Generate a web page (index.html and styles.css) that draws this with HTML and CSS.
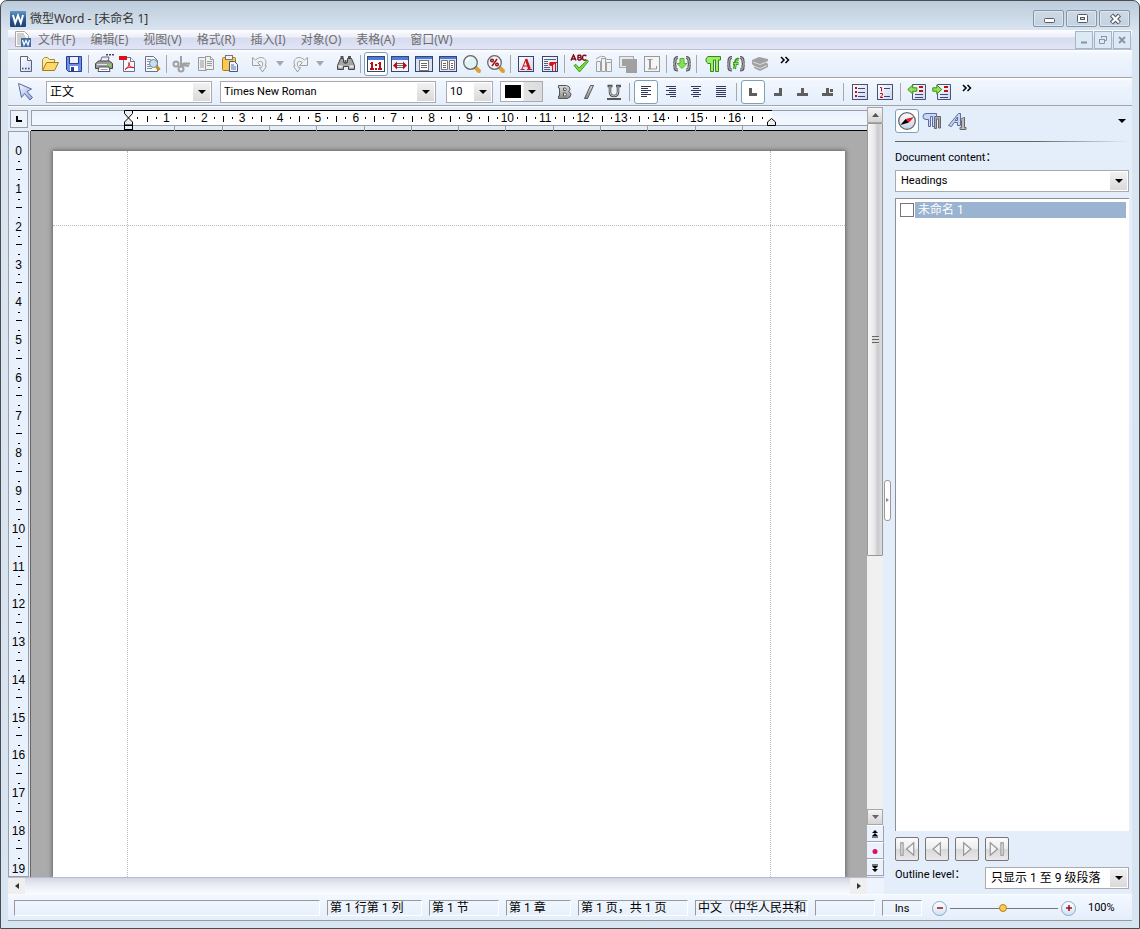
FILE: index.html
```html
<!DOCTYPE html>
<html lang="zh-CN">
<head>
<meta charset="utf-8">
<title>微型Word - [未命名 1]</title>
<link rel="stylesheet" href="styles.css">
</head>
<body>
<svg class="defs" aria-hidden="true">
  <defs>
    <linearGradient id="gPage" x1="0" y1="0" x2="1" y2="1"><stop offset="0" stop-color="#fff"/><stop offset="1" stop-color="#ccd6ee"/></linearGradient>
    <linearGradient id="gWord" x1="0" y1="0" x2="0" y2="1"><stop offset="0" stop-color="#5f97c6"/><stop offset=".5" stop-color="#2a5790"/><stop offset="1" stop-color="#1d4075"/></linearGradient>
    <linearGradient id="gBlue" x1="0" y1="0" x2="1" y2="1"><stop offset="0" stop-color="#fff"/><stop offset="1" stop-color="#8fa4e0"/></linearGradient>
    <linearGradient id="gGray" x1="0" y1="0" x2="0" y2="1"><stop offset="0" stop-color="#ddd"/><stop offset="1" stop-color="#8a8a8a"/></linearGradient>
    <linearGradient id="gBall" x1="0" y1="0" x2="0" y2="1"><stop offset="0" stop-color="#fff"/><stop offset="1" stop-color="#c4d4e8"/></linearGradient>
  </defs>
</svg>
<div class="window">
  <header class="titlebar">
    <svg class="app-icon" viewBox="0 0 16 16"><rect width="16" height="16" rx="1" fill="url(#gWord)"/><path d="M3 4l2.200 8L8 4.500l2.800 7.500L13 4" fill="none" stroke="#fff" stroke-width="2"/></svg>
    <h1 class="title">微型Word - [未命名 1]</h1>
    <div class="window-buttons">
      <button aria-label="最小化"><svg viewBox="0 0 18 12"><rect x="4.500" y="5.500" width="10" height="4" rx="1" fill="#fff" stroke="#555a66"/></svg></button>
      <button aria-label="最大化"><svg viewBox="0 0 18 12"><rect x="4.500" y="1.500" width="10" height="8" rx="1" fill="#fff" stroke="#555a66"/><rect x="7.500" y="4.500" width="4" height="2" fill="#cdd8e4" stroke="#555a66"/></svg></button>
      <button aria-label="关闭"><svg viewBox="0 0 18 12"><path d="M5.500 2l8 8m0-8l-8 8" stroke="#555a66" stroke-width="4.500"/><path d="M6 2.500l7 7m0-7l-7 7" stroke="#fff" stroke-width="2.200"/></svg></button>
    </div>
  </header>

  <div class="client">
    <nav class="menubar">
      <svg class="doc-icon" viewBox="0 0 18 18"><path d="M1.500 .5h9l4 4v11h-13z" fill="#fdfdfd" stroke="#a8a8a8"/><path d="M3 3h7M3 5h8M3 7h9M3 9h4M3 11h4M3 13h4" stroke="#a0a0a0"/><rect x="7" y="7" width="10" height="9" fill="#3f6da6"/><path d="M8.500 9l1.500 5 2-4.500 2 4.500 1.500-5" fill="none" stroke="#fff" stroke-width="1.300"/></svg>
      <div class="menus">
        <button>文件(F)</button><button>编辑(E)</button><button>视图(V)</button><button>格式(R)</button><button>插入(I)</button><button>对象(O)</button><button>表格(A)</button><button>窗口(W)</button>
      </div>
      <div class="mdi-buttons">
        <button aria-label="最小化文档"><svg viewBox="0 0 12 12"><path d="M3 8.500h6" stroke="#8496a8" stroke-width="2"/></svg></button>
        <button aria-label="还原文档"><svg viewBox="0 0 12 12" fill="none" stroke="#8496a8"><path d="M4.500 4V2.500h5v4H8"/><path d="M4 2.500h6M2 5.500h6"/><path d="M2.500 5.500h5v4h-5z"/></svg></button>
        <button aria-label="关闭文档"><svg viewBox="0 0 12 12"><path d="M3 3l6 6m0-6l-6 6" stroke="#8496a8" stroke-width="2"/></svg></button>
      </div>
    </nav>

    <div class="toolbar standard" role="toolbar">
      <button aria-label="新建"><svg viewBox="0 0 20 20"><path d="M4.500 2.500h7l4 4v11h-11z" fill="url(#gPage)" stroke="#5a6480"/><path d="M11.500 2.500v4h4" fill="#fff" stroke="#5a6480"/><path d="M6 14.500h8" stroke="#445" stroke-width="1.500" stroke-dasharray="1.500 1.500"/></svg></button>
      <button aria-label="打开"><svg viewBox="0 0 20 20"><path d="M2.500 16V5.500l2-2h3l2 2h5v3" fill="#ffe9a0" stroke="#b18a2c"/><path d="M2.500 16.500l4-8h12l-4 8z" fill="#ffd869" stroke="#a57c20"/></svg></button>
      <button aria-label="保存"><svg viewBox="0 0 20 20"><path d="M2.500 2.500h15v15h-13l-2-2z" fill="#6d8de8" stroke="#27418f"/><rect x="5.500" y="2.500" width="9" height="7" fill="#eef3ff" stroke="#27418f"/><rect x="6" y="12" width="8" height="5" fill="#fff"/><rect x="7" y="13" width="3" height="4" fill="#27418f"/></svg></button>
      <i class="sep"></i>
      <button aria-label="打印"><svg viewBox="0 0 20 20"><path d="M12 .8h8" stroke="#446" stroke-width="1.500" stroke-dasharray="2 1"/><path d="M6 8l2-5h7l-1 5z" fill="#e7eefb" stroke="#667"/><path d="M1.500 9.500l3-2.500h11l3 2.500v5h-17z" fill="#9a9a9a" stroke="#444"/><path d="M3 10.500h10" stroke="#e6e6e6"/><rect x="14" y="10" width="3" height="2" fill="#74e046"/><path d="M5 13h10l1 4.500H4z" fill="#fff" stroke="#555"/><path d="M6.500 15.500h7" stroke="#8aa0d0"/></svg></button>
      <button aria-label="导出 PDF"><svg viewBox="0 0 20 20"><path d="M5.500 3.500h7l4 4v10h-11z" fill="#f7f9fd" stroke="#68708a"/><path d="M12.500 3.500v4h4" fill="#fff" stroke="#68708a"/><rect x="1" y="2" width="8" height="4" fill="#d8101c"/><path d="M7 15.500c3-2 5-5 4-7-1 3 2 6 5 5-4-1-7 0-9 2z" fill="none" stroke="#d8101c"/></svg></button>
      <button aria-label="打印预览"><svg viewBox="0 0 20 20"><path d="M3.500 2.500h8l4 4v11h-12z" fill="#f7f9fd" stroke="#68708a"/><path d="M5 5.500h4M5 7.500h3M5 10.500h3M5 12.500h3M5 14.500h5" stroke="#8790a8"/><circle cx="11.500" cy="9.500" r="4" fill="#c4e2ee" stroke="#7a8190"/><path d="M14.500 12.500l3 3.500" stroke="#c38d1d" stroke-width="3"/></svg></button>
      <i class="sep"></i>
      <button aria-label="剪切"><svg viewBox="0 0 20 20" fill="none" stroke="#a0a0a0" stroke-width="2"><path d="M9 2v9l3-1.500h6M9 11l8 1"/><circle cx="4" cy="10" r="2.500"/><circle cx="9" cy="15" r="2.500"/></svg></button>
      <button aria-label="复制"><svg viewBox="0 0 20 20" fill="#eef0f4" stroke="#999"><path d="M2.500 3.500h6l2 2v11h-8z"/><path d="M4 7h4M4 9h4M4 11h4M4 13h4"/><path d="M9.500 2.500h5l3 3v10h-8z"/><path d="M11 7.500h5M11 9.500h5M11 11.500h5M14.500 2.500v3h3"/></svg></button>
      <button aria-label="粘贴"><svg viewBox="0 0 20 20"><rect x="2.500" y="3.500" width="13" height="13" rx="1" fill="#fbc94e" stroke="#a8771c"/><rect x="5.500" y="1.500" width="7" height="4" fill="#f2f2f2" stroke="#777"/><path d="M9.500 7.500h5l3 3v7h-8z" fill="#edf3ff" stroke="#415584"/><path d="M11 11h3M11 13h5M11 15h5" stroke="#5b70a8"/></svg></button>
      <button class="undo" aria-label="撤消"><svg viewBox="0 0 20 20"><path d="M2.500 3.500v8h8l-3-3c4-3 7 0 4 5l-2 .2 3 4.300 4-6-1.500-.5C18.500 6 12 0 5.500 6z" fill="#f0f2f6" stroke="#a0a0a0"/></svg></button>
      <button class="drop" aria-label="撤消列表"><svg viewBox="0 0 8 5"><path d="M0 0h8L4 5z" fill="#a4a7ac"/></svg></button>
      <button aria-label="重做"><svg viewBox="0 0 20 20"><path d="M17.500 3.500v8h-8l3-3c-4-3-7 0-4 5l2 .2-3 4.300-4-6 1.500-.5C1.500 6 8 0 14.500 6z" fill="#f0f2f6" stroke="#a0a0a0"/></svg></button>
      <button class="drop" aria-label="重做列表"><svg viewBox="0 0 8 5"><path d="M0 0h8L4 5z" fill="#a4a7ac"/></svg></button>
      <button class="find" aria-label="查找"><svg viewBox="0 0 20 20"><path d="M4.500 4.500h3v4h4v-4h4l3 7v4h-6v-3h-5v3h-6v-4z" fill="#a5a5a5" stroke="#444"/><path d="M4.500 3h3M12 3h3M9.500 6v4" stroke="#555" stroke-width="2"/><path d="M2.500 12.500h4M13.500 12.500h4" stroke="#eee" stroke-width="2"/></svg></button>
      <i class="sep"></i>
      <button class="on" aria-label="实际大小"><svg viewBox="0 0 20 20"><rect x="1.500" y="2.500" width="17" height="15" fill="#fff" stroke="#34466f"/><rect x="2" y="3" width="16" height="3" fill="#4d7ae0"/><path d="M4 9h1V8h2v6h1v2H4v-2h1v-4H4zM12 9h1V8h2v6h1v2h-4v-2h1v-4h-1zM9 10h2v2H9zM9 14h2v2H9z" fill="#bb0e14"/></svg></button>
      <button aria-label="适合页宽"><svg viewBox="0 0 20 20"><rect x="1.500" y="2.500" width="17" height="15" fill="#f4f6fc" stroke="#34466f"/><rect x="2" y="3" width="16" height="3" fill="#4d7ae0"/><path d="M3 11.500l4-4v8zM17 11.500l-4-4v8z" fill="#bb0e14"/><path d="M7 9.500h6M7 11.500h6M7 13.500h6" stroke="#666"/></svg></button>
      <button aria-label="整页"><svg viewBox="0 0 20 20"><rect x="1.500" y="2.500" width="17" height="15" fill="#dce2f3" stroke="#34466f"/><rect x="2" y="3" width="16" height="2" fill="#4d7ae0"/><rect x="5.500" y="6.500" width="9" height="10" fill="#fff" stroke="#777"/><path d="M7 9.500h6M7 11.500h6M7 13.500h6" stroke="#666"/></svg></button>
      <button aria-label="双页"><svg viewBox="0 0 20 20"><rect x="1.500" y="2.500" width="17" height="15" fill="#dce2f3" stroke="#34466f"/><rect x="2" y="3" width="16" height="2" fill="#4d7ae0"/><path d="M3.500 6.500h6v9h-6zM11.500 6.500h5v9h-5z" fill="#fff" stroke="#777"/><path d="M5 9.500h3M5 11.500h3M5 13.500h3M13 9.500h2M13 11.500h2M13 13.500h2" stroke="#666"/></svg></button>
      <button aria-label="缩放"><svg viewBox="0 0 20 20"><path d="M13 13l4 4" stroke="#d9a233" stroke-width="4" stroke-linecap="round"/><circle cx="8.500" cy="8.500" r="6.800" fill="#dff2f4" stroke="#666" stroke-width="1.300"/><path d="M4.500 8c0-3 2-4 4-4" fill="none" stroke="#fff" stroke-width="2"/></svg></button>
      <button aria-label="缩放比例"><svg viewBox="0 0 20 20"><path d="M13 13l4 4" stroke="#d9a233" stroke-width="4" stroke-linecap="round"/><circle cx="8.500" cy="8.500" r="6.800" fill="#eef6fa" stroke="#666" stroke-width="1.300"/><path d="M11 5l-5 7" stroke="#a01018" stroke-width="1.500"/><circle cx="6" cy="6.500" r="1.300" fill="none" stroke="#a01018" stroke-width="1.500"/><circle cx="11" cy="10.500" r="1.300" fill="none" stroke="#a01018" stroke-width="1.500"/></svg></button>
      <i class="sep"></i>
      <button aria-label="字符格式"><svg viewBox="0 0 20 20"><rect x="2.500" y="2.500" width="15" height="15" fill="url(#gPage)" stroke="#34466f"/><path d="M6 15L9.800 5.500M7 12h5M4.500 15.500h4M11 15.500h5" fill="none" stroke="#cb1118"/><path d="M10 5l3.500 10" stroke="#cb1118" stroke-width="2.500"/></svg></button>
      <button aria-label="段落格式"><svg viewBox="0 0 20 20"><rect x="2.500" y="2.500" width="15" height="15" fill="url(#gPage)" stroke="#34466f"/><path d="M4 5.500h12M4 7.500h4M4 9.500h4M4 11.500h4M4 13.500h6M4 15.500h6" stroke="#555f7c"/><path d="M17 8h-6a2 2 0 000 4h1" fill="#d11"/><path d="M12.500 8v9M15.500 8v9M10.500 8.500H17" stroke="#d11"/></svg></button>
      <i class="sep"></i>
      <button class="abc" aria-label="拼写检查"><svg viewBox="0 0 20 20"><path d="M4 11.500l2-1 3 3.500 8.500-8 .8 1.500L9.500 18z" fill="#79e23e" stroke="#369b13"/><g fill="none" stroke="#7d1116" stroke-width="1.500"><path d="M1 6.500L3.500 1 6 6.500M2 5h3M8 1v5M8 1.200h2q2 1.200 0 2.300 3 1.200 0 2.500H8M16.500 1.700q-4-1.500-4 2t4 2"/></g></svg></button>
      <button aria-label="插入图表"><svg viewBox="0 0 20 20" fill="#f0f2f6" stroke="#a0a0a0"><path d="M2.500 7.500h4v10h-4zM7.500 4.500h4v13h-4zM12.500 8.500h5v9h-5z"/><path d="M2 5l5-3M7.500 2.500h3l2 3h5v3" fill="none"/></svg></button>
      <button aria-label="插入框架"><svg viewBox="0 0 20 20"><rect x="1.500" y="2.500" width="14" height="11" fill="#e7e9ec" stroke="#aaa"/><path d="M4 5h4v7H4z" fill="#a0a0a0"/><path d="M8 5h11v14H8z" fill="#a0a0a0"/></svg></button>
      <button aria-label="文本框"><svg viewBox="0 0 20 20"><rect x="2.500" y="2.500" width="15" height="15" fill="#f4f5f7" stroke="#999"/><path d="M5.500 5.500h5M6 15h8.500v-3" fill="none" stroke="#999"/><path d="M8 5v10" stroke="#999" stroke-width="2"/></svg></button>
      <i class="sep"></i>
      <button aria-label="插入域"><svg viewBox="0 0 20 20"><path d="M6 3.500q-3 0-3 3V8q0 2-2 2 2 0 2 2v2q0 2 3 2M14 3.500q3 0 3 3V8q0 2 2 2-2 0-2 2v2q0 2-3 2" fill="none" stroke="#555" stroke-width="3"/><path d="M6 3.500q-3 0-3 3V8q0 2-2 2 2 0 2 2v2q0 2 3 2M14 3.500q3 0 3 3V8q0 2 2 2-2 0-2 2v2q0 2-3 2" fill="none" stroke="#bbb"/><path d="M8 4.500h4v5h3l-5 5-5-5h3z" fill="#87e34b" stroke="#5cae36"/></svg></button>
      <i class="sep"></i>
      <button aria-label="显示段落标记"><svg viewBox="0 0 20 20"><path d="M18.500 2.500H6a4 4 0 000 7h2.500v8h3V6h2v11.500h3V6h2z" fill="#9ced6a" stroke="#38861c"/></svg></button>
      <button aria-label="显示域代码"><svg viewBox="0 0 20 20"><path d="M6 3.500q-3 0-3 3V8q0 2-2 2 2 0 2 2v2q0 2 3 2M14 3.500q3 0 3 3V8q0 2 2 2-2 0-2 2v2q0 2-3 2" fill="none" stroke="#555" stroke-width="3"/><path d="M6 3.500q-3 0-3 3V8q0 2-2 2 2 0 2 2v2q0 2 3 2M14 3.500q3 0 3 3V8q0 2 2 2-2 0-2 2v2q0 2-3 2" fill="none" stroke="#bbb"/><path d="M13 5.500q-3-1-3.500 3L8.500 15M7 9.500h5.500" fill="none" stroke="#369320" stroke-width="3"/><path d="M13 5.500q-2.500-.5-3 3L8.500 15M7.500 9.500H12" fill="none" stroke="#8be551"/></svg></button>
      <button aria-label="数据库"><svg viewBox="0 0 20 20"><path d="M2 6l7-3 9 2v2l-2 1 2 2v3l-8 4-6-3v-2l-2-2V8z" fill="#a0a0a0"/><path d="M3 8l7 2.500L17 8M4 12l6 2.500 7-3" fill="none" stroke="#ddd"/></svg></button>
      <button class="more" aria-label="更多按钮"><svg viewBox="0 0 10 8"><path d="M1 1l3 3-3 3M5.500 1l3 3-3 3" fill="none" stroke="#000" stroke-width="1.500"/></svg></button>
    </div>

    <div class="toolbar format" role="toolbar">
      <button class="picker" aria-label="选择对象"><svg viewBox="0 0 20 20"><path d="M3.500 1.500l13 5.500-4.500 2.500 5.500 6-2.500 2.500-5.500-6.500-3 4z" fill="url(#gBlue)" stroke="#5a67a0"/></svg></button>
      <div class="combo style"><select aria-label="样式"><option>正文</option></select></div>
      <div class="combo font"><select aria-label="字体"><option>Times New Roman</option></select></div>
      <div class="combo size"><select aria-label="字号"><option>10</option></select></div>
      <button class="color" aria-label="字体颜色"><i></i></button>
      <div class="group">
        <button aria-label="粗体"><svg viewBox="0 0 20 20"><path fill-rule="evenodd" d="M4.500 3.500h8q3.500 1 3.500 3.500 0 2-1.500 2.500 2.500 1 2.500 3 0 3-4 4H4.500v-2.500h1v-8h-1zM9.500 6v2.500h2q1.500-1 0-2.500zM9.500 11v3h2q2-1.500 0-3z" fill="url(#gGray)" stroke="#555"/></svg></button>
        <button aria-label="斜体"><svg viewBox="0 0 20 20"><path d="M11.500 3.500h3l-6 13h-3z" fill="url(#gGray)" stroke="#555"/></svg></button>
        <button aria-label="下划线"><svg viewBox="0 0 20 20"><path d="M6 4v6q0 4 4 4t4-4V4M3.500 4h5M12 4h5" fill="none" stroke="#555" stroke-width="2.600"/><path d="M6 4v6q0 4 4 4t4-4V4" fill="none" stroke="#bbb"/><path d="M3 17h14" stroke="#555" stroke-width="2"/></svg></button>
      </div>
      <i class="sep"></i>
      <div class="group">
        <button class="on" aria-label="左对齐"><svg viewBox="0 0 20 20" stroke="#33395a"><path d="M5 4.500h10M5 6.500h7M5 8.500h10M5 10.500h7M5 12.500h10M5 14.500h6"/></svg></button>
        <button aria-label="右对齐"><svg viewBox="0 0 20 20" stroke="#33395a"><path d="M5 4.500h10M8 6.500h7M5 8.500h10M8 10.500h7M5 12.500h10M9 14.500h6"/></svg></button>
        <button aria-label="居中"><svg viewBox="0 0 20 20" stroke="#33395a"><path d="M5 4.500h10M7 6.500h6M5 8.500h10M7 10.500h6M5 12.500h10M7 14.500h6"/></svg></button>
        <button aria-label="两端对齐"><svg viewBox="0 0 20 20" stroke="#33395a"><path d="M5 4.500h10M5 6.500h10M5 8.500h10M5 10.500h10M5 12.500h10M5 14.500h10"/></svg></button>
      </div>
      <i class="sep"></i>
      <div class="group">
        <button class="on" aria-label="左制表符"><svg viewBox="0 0 20 20"><path d="M6 6h3v5h5v3H6z" fill="#5e5e5e"/></svg></button>
        <button aria-label="右制表符"><svg viewBox="0 0 20 20"><path d="M14 6h-3v5H6v3h8z" fill="#5e5e5e"/></svg></button>
        <button aria-label="居中制表符"><svg viewBox="0 0 20 20"><path d="M8 6h3v5h4v3H4v-3h4z" fill="#5e5e5e"/></svg></button>
        <button aria-label="小数点制表符"><svg viewBox="0 0 20 20"><path d="M8 6h3v5h4v3H4v-3h4zM12 7h3v3h-3z" fill="#5e5e5e"/></svg></button>
      </div>
      <i class="sep"></i>
      <div class="group">
        <button aria-label="项目符号"><svg viewBox="0 0 20 20"><rect x="2.500" y="2.500" width="15" height="15" fill="url(#gPage)" stroke="#4a5274"/><path d="M5 5h2v2H5zM5 9h2v2H5zM5 13h2v2H5z" fill="#bc1018"/><path d="M8 6.500h7M8 10.500h7M8 14.500h7" stroke="#3c4878"/></svg></button>
        <button aria-label="编号"><svg viewBox="0 0 20 20"><rect x="2.500" y="2.500" width="15" height="15" fill="url(#gPage)" stroke="#4a5274"/><path d="M5 5.500h1.500v4M5 11.500h2.500v1.700L5 15.500h3" fill="none" stroke="#bc1018"/><path d="M9 6.500h6M9 14.500h6" stroke="#3c4878"/></svg></button>
      </div>
      <i class="sep"></i>
      <div class="group">
        <button aria-label="减少缩进"><svg viewBox="0 0 20 20"><path d="M5.500 2.500h13v15h-13z" fill="url(#gPage)" stroke="#4a5274"/><path d="M12 5h4M12 9h4" stroke="#bc1018" stroke-width="2"/><path d="M8 12.500h8M8 15.500h8" stroke="#3c4878"/><path d="M.8 7.500l5-4.500v2.800h4v3.400h-4V12z" fill="#91e553" stroke="#388d18"/></svg></button>
        <button aria-label="增加缩进"><svg viewBox="0 0 20 20"><path d="M5.500 2.500h13v15h-13z" fill="url(#gPage)" stroke="#4a5274"/><path d="M12 5h4M12 9h4" stroke="#bc1018" stroke-width="2"/><path d="M8 12.500h8M8 15.500h8" stroke="#3c4878"/><path d="M9.800 7.500l-5-4.500v2.800h-4v3.400h4V12z" fill="#91e553" stroke="#388d18"/></svg></button>
      </div>
      <button class="more" aria-label="更多按钮"><svg viewBox="0 0 10 8"><path d="M1 1l3 3-3 3M5.500 1l3 3-3 3" fill="none" stroke="#000" stroke-width="1.500"/></svg></button>
    </div>

    <div class="body">
      <div class="editor">
        <div class="view">
          <div class="view-main">
            <div class="ruler-row">
              <button class="tab-kind" aria-label="制表符类型"><svg viewBox="0 0 8 8"><path d="M1 1h2v4h4v2H1z"/></svg></button>
              <div class="ruler">
                <div class="ruler-scale">
                  <div class="numbers">
                    <span>1</span><span>2</span><span>3</span><span>4</span><span>5</span><span>6</span><span>7</span><span>8</span><span>9</span><span>10</span><span>11</span><span>12</span><span>13</span><span>14</span><span>15</span><span class="last">16</span>
                  </div>
                </div>
                <div class="tabstops"><i></i><i></i><i></i><i></i><i></i><i></i><i></i><i></i><i></i><i></i><i></i><i></i><i></i></div>
                <svg class="indent-left" viewBox="0 0 9 20"><path d="M.5 .5h8v3L4.500 8l4 4v3h-8v-3l4-4-4-4.500z" fill="#eee" stroke="#000"/><rect x=".5" y="15.500" width="8" height="4" fill="#e8edf5" stroke="#000"/></svg>
                <svg class="indent-right" viewBox="0 0 9 8"><path d="M.5 7.500V4l4-3.500 4 3.500v3.500z" fill="#eee" stroke="#000"/></svg>
              </div>
            </div>
            <div class="canvas-row">
              <div class="vruler"><div class="vnumbers">
                <span>0</span><span>1</span><span>2</span><span>3</span><span>4</span><span>5</span><span>6</span><span>7</span><span>8</span><span>9</span><span>10</span><span>11</span><span>12</span><span>13</span><span>14</span><span>15</span><span>16</span><span>17</span><span>18</span><span>19</span>
              </div></div>
              <main class="canvas"><div class="page"><div class="page-head"></div><div class="page-text"></div></div></main>
            </div>
          </div>
          <div class="vscroll">
            <button class="arrow" aria-label="向上滚动"><svg viewBox="0 0 7 4"><path d="M0 4L3.500 0 7 4z" fill="#555"/></svg></button>
            <div class="thumb"><i></i></div>
            <div class="track"></div>
            <button class="arrow" aria-label="向下滚动"><svg viewBox="0 0 7 4"><path d="M0 0h7L3.500 4z" fill="#666"/></svg></button>
            <button class="jump" aria-label="上一页"><svg viewBox="0 0 8 8"><path d="M4 0l3 3H1zM4 3l3 3H1zM1 6.500h6v1H1z"/></svg></button>
            <button class="jump" aria-label="选择浏览对象"><svg viewBox="0 0 8 8"><circle cx="4" cy="4.500" r="2.500" fill="#d6124c"/><circle cx="3.500" cy="4" r="1" fill="#f0a"/></svg></button>
            <button class="jump" aria-label="下一页"><svg viewBox="0 0 8 8"><path d="M4 8L1 5h6zM4 5L1 2h6zM1 .5h6v1H1z"/></svg></button>
          </div>
        </div>
        <div class="hscroll">
          <button aria-label="向左滚动"><svg viewBox="0 0 4 8"><path d="M4 1v6L0 4z" fill="#333"/></svg></button>
          <div class="htrack"></div>
          <button aria-label="向右滚动"><svg viewBox="0 0 4 8"><path d="M0 1v6l4-3z" fill="#333"/></svg></button>
        </div>
      </div>

      <aside class="sidebar">
        <button class="splitter" aria-label="折叠侧栏"><svg viewBox="0 0 4 6"><path d="M0 1l3 2-3 2z" fill="#888"/></svg></button>
        <div class="panel">
          <div class="panel-tabs">
            <button class="on" aria-label="导航"><svg viewBox="0 0 20 20"><circle cx="10" cy="10" r="8.300" fill="url(#gBall)" stroke="#666" stroke-width="1.300"/><path d="M3.500 14L8.500 8l3.500 3.500z" fill="#000"/><path d="M17 6L8.500 8l3.500 3.500z" fill="#f0141c"/></svg></button>
            <button aria-label="段落样式"><svg viewBox="0 0 20 20"><path d="M18.500 5.500h-8v4h2v8h2V8h2v9h2z" fill="#aaa" stroke="#666"/><path d="M14.500 2.500H4a3 3 0 000 6h2.500v7h2v-10h2v10h2v-10h2z" fill="#c9d7f5" stroke="#5a6d9c"/></svg></button>
            <button aria-label="字符样式"><svg viewBox="0 0 20 20"><path d="M13.500 8.500l3-2h1v10h1.500v2h-6v-2h1.500V10z" fill="#bbb" stroke="#666"/><path d="M1.500 14.500L11.500 2.500h2v12h-3v-3H7l-2.500 4zM8 9.500h2.500v-3.500z" fill="#c9d7f5" stroke="#5a6d9c"/></svg></button>
            <button class="panel-menu" aria-label="面板菜单"><svg viewBox="0 0 8 4"><path d="M0 0h8L4 4z"/></svg></button>
          </div>
          <label class="content-label" for="content">Document content：</label>
          <div class="combo content"><select id="content"><option>Headings</option></select></div>
          <div class="tree">
            <input type="checkbox" id="doc1"><label for="doc1">未命名 1</label>
          </div>
          <div class="nav-buttons">
            <button aria-label="第一个"><svg viewBox="0 0 16 16"><path d="M2.500 2.500h2v11h-2zM14 2.500v11L7.500 8z"/></svg></button>
            <button aria-label="上一个"><svg viewBox="0 0 16 16"><path d="M11 2.500v11L4.500 8z"/></svg></button>
            <button aria-label="下一个"><svg viewBox="0 0 16 16"><path d="M5 2.500v11L11.500 8z"/></svg></button>
            <button aria-label="最后一个"><svg viewBox="0 0 16 16"><path d="M11.500 2.500h2v11h-2zM2 2.500v11L8.500 8z"/></svg></button>
          </div>
          <div class="outline">
            <label for="level">Outline level：</label>
            <div class="combo level"><select id="level"><option>只显示 1 至 9 级段落</option></select></div>
          </div>
        </div>
      </aside>
    </div>

    <footer class="status">
      <span class="cell message"></span>
      <span class="cell position">第 1 行第 1 列</span>
      <span class="cell section">第 1 节</span>
      <span class="cell chapter">第 1 章</span>
      <span class="cell pages">第 1 页，共 1 页</span>
      <span class="cell language">中文（中华人民共和</span>
      <span class="cell blank"></span>
      <span class="cell insert">Ins</span>
      <div class="zoom">
        <button aria-label="缩小"><svg viewBox="0 0 8 8"><path d="M1 4h6" stroke="#a00d18" stroke-width="1.500"/></svg></button>
        <input type="range" aria-label="显示比例" min="0" max="100" value="49">
        <button aria-label="放大"><svg viewBox="0 0 8 8"><path d="M1 4h6M4 1v6" stroke="#a00d18" stroke-width="1.500"/></svg></button>
      </div>
      <span class="percent">100%</span>
    </footer>
  </div>
</div>
</body>
</html>
```

FILE: styles.css
```css
* { box-sizing: border-box; }

body {
  margin: 0;
  background: #fff;
  color: #000;
  font: 11px/16px Roboto, "Noto Sans CJK SC", sans-serif;
}

button {
  display: flex;
  align-items: center;
  justify-content: center;
  flex: none;
  margin: 0;
  padding: 0;
  border: 0;
  background: none;
  color: inherit;
  font: inherit;
}

svg { display: block; flex: none; }
.defs { position: absolute; width: 0; height: 0; }

.window {
  display: flex;
  flex-direction: column;
  height: 100vh;
  padding: 0 7px 7px;
  border: 1px solid #4b4b52;
  border-radius: 7px 7px 0 0;
  background: linear-gradient(#bccbdb, #d9e5f0 30px, #d7e4f1);
  overflow: hidden;
}

/* Title bar */
.titlebar {
  display: flex;
  align-items: center;
  flex: none;
  height: 29px;
  padding: 6px 2px 0;
}
.app-icon { width: 16px; height: 16px; }
.title {
  flex: 1;
  margin: 0 0 0 4px;
  color: #333;
  font: 12px/20px "Noto Sans", "Noto Sans CJK SC", sans-serif;
}
.window-buttons { display: flex; gap: 2px; }
.window-buttons button {
  width: 31px;
  height: 17px;
  border: 1px solid #8495a8;
  border-radius: 2px;
  background: linear-gradient(#cdd9e5, #c3d1e0);
  box-shadow: inset 0 0 0 1px #dde6ee;
}
.window-buttons svg { width: 18px; height: 12px; }

.client {
  display: flex;
  flex: 1;
  flex-direction: column;
  min-height: 0;
  border-bottom: 1px solid #999;
  background: #e4eefb;
}

/* Menu bar */
.menubar {
  display: flex;
  align-items: center;
  flex: none;
  height: 20px;
  padding: 1px 1px 0 6px;
  border-bottom: 1px solid #b9bfd4;
  background: linear-gradient(#fdfdff, #edeff8 7px, #d6dbef 8px, #e1e5f6);
}
.doc-icon { width: 18px; height: 18px; }
.menus {
  display: flex;
  flex: 1;
  gap: 15px;
  margin-left: 6px;
  color: #6e6e6e;
  font: 12px/18px "Noto Sans", "Noto Sans CJK SC", sans-serif;
}
.mdi-buttons { display: flex; gap: 1px; }
.mdi-buttons button {
  width: 18px;
  height: 18px;
  border: 1px solid #a3b6c6;
  background: #dde9f5;
}
.mdi-buttons svg { width: 12px; height: 12px; }

/* Toolbars */
.toolbar {
  display: flex;
  align-items: center;
  flex: none;
  height: 28px;
  border-bottom: 1px solid #a2a4a8;
  background: linear-gradient(#fff, #f1f6fe 3px, #e4eefb);
}
.toolbar.standard { padding-left: 6px; }
.toolbar.format { padding-left: 4px; }
.toolbar button { width: 24px; height: 24px; }
.toolbar button svg { width: 20px; height: 20px; }
.toolbar .on, .panel-tabs .on {
  border: 1px solid #7fa0b8;
  border-radius: 3px;
  background: #fff;
}
.toolbar .sep {
  flex: none;
  width: 1px;
  height: 18px;
  margin: 0 3px 0 2px;
  background: #a5a8ad;
}
.format .sep { margin: 0 4px 0 3px; }
.toolbar .undo { margin-left: 6px; }
.toolbar .drop { width: 16px; }
.toolbar .drop svg { width: 8px; height: 5px; }
.toolbar .find { margin-left: 6px; }
.toolbar .more { width: 12px; margin-left: 7px; align-self: flex-start; }
.toolbar .more svg { width: 10px; height: 8px; margin-bottom: 4px; }
.toolbar .picker { width: 26px; margin-right: 8px; }
.group { display: flex; gap: 1px; }

.combo {
  position: relative;
  flex: none;
  height: 22px;
  border: 1px solid #a9abb0;
  background: #fff;
}
.combo::before {
  position: absolute;
  top: 1px;
  right: 1px;
  bottom: 1px;
  width: 17px;
  background: linear-gradient(#f2f2f2, #d9d9d9);
  content: "";
  pointer-events: none;
}
.combo::after {
  position: absolute;
  top: 8px;
  right: 5px;
  border: 4px solid transparent;
  border-top-color: #000;
  border-bottom: 0;
  content: "";
  pointer-events: none;
}
.combo select {
  display: block;
  width: 100%;
  height: 20px;
  margin: 0;
  padding: 0 18px 0 3px;
  border: 0;
  appearance: none;
  background: transparent;
  color: #000;
  font: inherit;
}
.combo.style { width: 166px; margin-right: 8px; font-size: 12px; }
.combo.font { width: 216px; margin-right: 10px; }
.combo.size { width: 47px; margin-right: 7px; }
.toolbar .color {
  justify-content: space-between;
  width: 43px;
  height: 21px;
  margin-right: 9px;
  padding: 0 6px 0 4px;
  border: 1px solid #a9abb0;
  background: linear-gradient(90deg, #fff 22px, #e3e3e3 23px, #dcdcdc);
}
.color i { width: 16px; height: 13px; background: #000; }
.color::after {
  border: 4px solid transparent;
  border-top-color: #000;
  border-bottom: 0;
  content: "";
}

/* Editor */
.body { display: flex; flex: 1; min-height: 0; }
.editor { display: flex; flex: 1; flex-direction: column; min-width: 0; }
.view { display: flex; flex: 1; min-height: 0; }
.view-main { display: flex; flex: 1; flex-direction: column; min-width: 0; }

.ruler-row {
  display: flex;
  flex: none;
  height: 25px;
  padding: 3px 0 0 2px;
  border-top: 1px solid #f8fbff;
}
.tab-kind {
  width: 18px;
  height: 18px;
  border: 1px solid #9c9ea2;
  background: #edf3fc;
}
.tab-kind svg { width: 8px; height: 8px; }
.ruler {
  position: relative;
  flex: 1;
  margin-left: 3px;
  border-bottom: 1px solid #000;
}
.ruler-scale {
  display: flex;
  height: 16px;
  padding-left: 96px;
  border: 1px solid #9c9ea2;
  border-right: 0;
  background: linear-gradient(#e9f2fd, #f3f8ff);
}
.numbers {
  display: grid;
  grid-template-columns: repeat(16, 1fr);
  flex: none;
  width: 644px;
  padding: 0 19px;
  background:
    linear-gradient(#000, #000) 9px 6px / 1px 2px no-repeat,
    linear-gradient(#000, #000) 634px 6px / 1px 2px no-repeat,
    #fff;
  box-shadow: 0 -1px #000;
  font: 12px/14px "Liberation Sans", Arial, sans-serif;
}
.numbers span {
  display: flex;
  align-items: center;
  justify-content: space-between;
  padding: 0 8px 0 9px;
  background: linear-gradient(#000, #000) 0 5px / 1px 6px no-repeat;
}
.numbers .last {
  background:
    linear-gradient(#000, #000) 0 5px / 1px 6px no-repeat,
    linear-gradient(#000, #000) 100% 5px / 1px 6px no-repeat;
}
.numbers span::before, .numbers span::after {
  flex: none;
  width: 1px;
  height: 2px;
  background: #000;
  content: "";
}
.tabstops {
  display: grid;
  grid-template-columns: repeat(13, 1fr);
  width: 615px;
  height: 5px;
  margin-left: 97px;
}
.tabstops i { border-right: 1px solid #9c9ea2; }
.indent-left {
  position: absolute;
  top: 0;
  left: 93px;
  width: 9px;
  height: 20px;
}
.indent-right {
  position: absolute;
  top: 8px;
  left: 736px;
  width: 9px;
  height: 8px;
}

.canvas-row { display: flex; flex: 1; min-height: 0; }
.vruler {
  flex: none;
  width: 21px;
  margin-right: 1px;
  border: 1px solid #9c9ea2;
  background: #e8f1fc;
  overflow: hidden;
}
.vnumbers {
  display: grid;
  grid-template-rows: repeat(20, 1fr);
  height: 755px;
  font: 12px/18px "Liberation Sans", Arial, sans-serif;
}
.vnumbers span {
  display: flex;
  align-items: center;
  flex-direction: column;
  justify-content: space-between;
  padding: 9px 0 8px;
  background: linear-gradient(#000, #000) center bottom / 6px 1px no-repeat;
}
.vnumbers span::before, .vnumbers span::after {
  width: 2px;
  height: 1px;
  background: #000;
  content: "";
}
.vnumbers span:first-child::before { background: none; }

.canvas {
  flex: 1;
  padding: 20px 22px 0;
  border-left: 1px solid #66666a;
  background: #ababab;
  overflow: hidden;
}
.page {
  display: flex;
  flex-direction: column;
  height: 100%;
  background: #fff;
  box-shadow: 0 0 4px 1px #666;
}
.page-head { flex: none; height: 75px; border-bottom: 1px dotted #bbb; }
.page-head, .page-text { position: relative; }
.page-head::before, .page-text::before {
  position: absolute;
  top: 0;
  right: 74px;
  bottom: 0;
  left: 74px;
  border: dotted #bbb;
  border-width: 0 1px;
  content: "";
}
.page-text { flex: 1; }

.vscroll {
  display: flex;
  flex: none;
  flex-direction: column;
  width: 17px;
  padding: 1px 0;
}
.vscroll .arrow {
  width: 16px;
  height: 16px;
  border: 1px solid #a7a7a7;
  background: linear-gradient(#f5f5f5, #d4d4d4);
}
.arrow svg { width: 7px; height: 4px; }
.thumb {
  display: flex;
  align-items: center;
  justify-content: center;
  flex: 431;
  width: 16px;
  border: 1px solid #979797;
  border-radius: 1px;
  background: linear-gradient(90deg, #f7f7f7, #e9e9ea 45%, #cacacf 70%, #dedee0);
}
.thumb i {
  width: 7px;
  height: 8px;
  background: repeating-linear-gradient(#666 0 1px, #ddd 1px 3px);
}
.track { flex: 253; width: 16px; background: #f0f0f0; }
.vscroll .jump {
  width: 17px;
  height: 17px;
  border-top: 1px solid #fff;
  border-right: 1px solid #a0a4aa;
  border-bottom: 1px solid #a0a4aa;
  background: #eaf2fd;
}
.vscroll .jump svg { width: 8px; height: 8px; }

.hscroll {
  display: flex;
  flex: none;
  height: 17px;
  padding-right: 17px;
  border-top: 1px solid #b9bdcb;
  background: #eef4fd;
}
.hscroll button { width: 17px; background: #efefef; }
.hscroll button svg { width: 4px; height: 8px; }
.htrack { flex: 1; background: linear-gradient(#d3d6e6, #eceef6 8px, #fbfbfe); }

/* Sidebar */
.sidebar {
  display: flex;
  align-items: center;
  flex: none;
  width: 248px;
}
.splitter {
  width: 7px;
  height: 41px;
  border: 1px solid #999;
  border-radius: 3px;
  background: #fff;
}
.splitter svg { width: 4px; height: 6px; }
.panel {
  display: flex;
  align-self: stretch;
  flex: 1;
  flex-direction: column;
  min-width: 0;
  padding: 3px 3px 5px 4px;
}
.panel-tabs {
  display: flex;
  align-items: flex-start;
  flex: none;
  gap: 1px;
  height: 33px;
  border-bottom: 1px solid;
  border-image: linear-gradient(90deg, #666 60%, #e4eefb) 1;
}
.panel-tabs button { width: 24px; height: 24px; }
.panel-tabs button svg { width: 20px; height: 20px; }
.panel-tabs .panel-menu { width: 14px; margin-left: auto; }
.panel-tabs .panel-menu svg { width: 8px; height: 4px; }
.content-label { margin-top: 8px; }
.combo.content { margin-top: 4px; }
.combo.content select { padding-left: 5px; }
.tree {
  display: flex;
  align-items: flex-start;
  flex: 1;
  margin-top: 6px;
  padding: 3px 3px 3px 4px;
  border: solid #8e9094;
  border-width: 1px 0 0 1px;
  background: #fff;
}
.tree input {
  flex: none;
  width: 14px;
  height: 14px;
  margin: 1px 1px 0 0;
  border: 1px solid #777;
  appearance: none;
  background: #fff;
}
.tree label {
  flex: 1;
  padding-left: 3px;
  background: #9ab3d1;
  color: #fff;
  font-size: 12px;
}
.nav-buttons { display: flex; flex: none; gap: 6px; margin-top: 6px; }
.nav-buttons button {
  width: 24px;
  height: 24px;
  border: 1px solid #777;
  border-radius: 2px;
  background: linear-gradient(#fbfbfb, #ececec 50%, #d8d8d8 50%, #e9e9e9);
}
.nav-buttons svg {
  width: 18px;
  height: 18px;
  fill: #f4f4f4;
  stroke: #929292;
}
.outline {
  display: flex;
  align-items: flex-start;
  flex: none;
  justify-content: space-between;
  margin-top: 6px;
}
.combo.level { width: 144px; font-size: 12px; }
.combo.level select { padding-left: 5px; }

/* Status bar */
.status {
  display: flex;
  align-items: center;
  flex: none;
  gap: 7px;
  height: 26px;
  padding: 1px 14px 0 6px;
  border-top: 1px solid #f8fbff;
  background: linear-gradient(#f3f8ff, #e4eefb);
}
.cell {
  flex: none;
  height: 16px;
  padding-left: 2px;
  border: 1px solid #fff;
  border-top-color: #999;
  border-left-color: #999;
  font-size: 12px;
  line-height: 15px;
  white-space: nowrap;
  overflow: hidden;
}
.message { flex: 1; }
.position { width: 95px; }
.section { width: 70px; }
.chapter { width: 65px; }
.pages { width: 110px; }
.language { width: 113px; }
.blank { width: 60px; }
.insert { width: 40px; padding: 0; font-size: 11px; text-align: center; }
.zoom { display: flex; align-items: center; gap: 3px; margin-left: 3px; }
.zoom button {
  width: 15px;
  height: 15px;
  border: 1px solid #8fa8c0;
  border-radius: 50%;
  background: linear-gradient(#fff, #cfe3f6);
}
.zoom button svg { width: 8px; height: 8px; }
.zoom input {
  width: 108px;
  height: 15px;
  margin: 0;
  appearance: none;
  background: linear-gradient(#777, #777) 0 7px / 100% 1px no-repeat;
}
.zoom input::-webkit-slider-thumb {
  width: 8px;
  height: 8px;
  border: 1px solid #b28427;
  border-radius: 50%;
  appearance: none;
  background: #ffc94a;
}
.percent { flex: none; width: 30px; margin-left: 5px; }
```
